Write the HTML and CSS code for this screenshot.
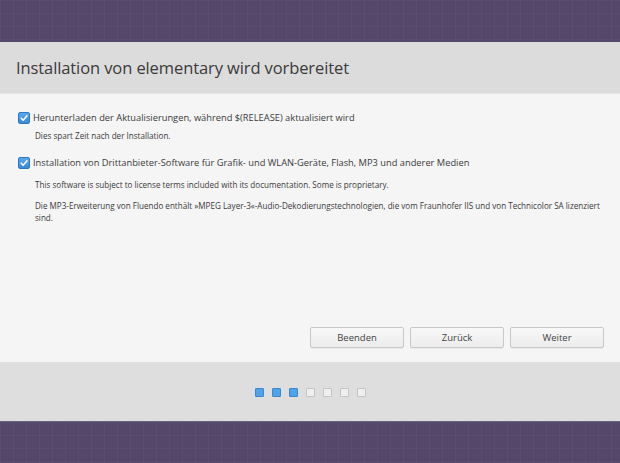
FILE: index.html
```html
<!DOCTYPE html>
<html>
<head>
<meta charset="utf-8">
<link rel="stylesheet" href="styles.css">
</head>
<body>
<div class="screen">
  <div class="top"></div>
  <div class="window">
    <div class="header"><h1 class="title">Installation von elementary wird vorbereitet</h1></div>
    <div class="content">
      <div class="options">
        <div class="option">
          <div class="check-row">
            <span class="cb"><svg viewBox="0 0 12 12" width="12" height="12"><path d="M2.6 6.2 L5 8.6 L9.6 3.4" fill="none" stroke="#fff" stroke-width="1.8" stroke-linecap="round" stroke-linejoin="round"/></svg></span>
            <span class="label">Herunterladen der Aktualisierungen, während $(RELEASE) aktualisiert wird</span>
          </div>
          <p class="desc">Dies spart Zeit nach der Installation.</p>
        </div>
        <div class="option">
          <div class="check-row">
            <span class="cb"><svg viewBox="0 0 12 12" width="12" height="12"><path d="M2.6 6.2 L5 8.6 L9.6 3.4" fill="none" stroke="#fff" stroke-width="1.8" stroke-linecap="round" stroke-linejoin="round"/></svg></span>
            <span class="label">Installation von Drittanbieter-Software für Grafik- und WLAN-Geräte, Flash, MP3 und anderer Medien</span>
          </div>
          <p class="desc">This software is subject to license terms included with its documentation. Some is proprietary.</p>
          <p class="desc">Die MP3-Erweiterung von Fluendo enthält »MPEG Layer-3«-Audio-Dekodierungstechnologien, die vom Fraunhofer IIS und von Technicolor SA lizenziert sind.</p>
        </div>
      </div>
      <div class="buttons">
        <button class="btn">Beenden</button>
        <button class="btn">Zurück</button>
        <button class="btn">Weiter</button>
      </div>
    </div>
    <div class="footer">
      <span class="dot on"></span><span class="dot on"></span><span class="dot on"></span><span class="dot"></span><span class="dot"></span><span class="dot"></span><span class="dot"></span>
    </div>
  </div>
  <div class="bottom"></div>
</div>
</body>
</html>
```
FILE: styles.css
```css
* { box-sizing: border-box; }
html, body { margin: 0; padding: 0; }
body {
  width: 620px; height: 463px; overflow: hidden;
  font-family: "Open Sans", "Noto Sans", sans-serif;
  color: #333;
  background: #54476a;
}
.screen { display: flex; flex-direction: column; height: 463px; }
.top {
  height: 42px;
  background-color: #54476a;
  background-image: linear-gradient(rgba(255,255,255,0.03) 1px, transparent 1px), linear-gradient(90deg, rgba(255,255,255,0.03) 1px, transparent 1px);
  background-size: 13px 13px;
}
.bottom {
  flex: 1;
  background-color: #54476a;
  border-top: 1px solid #6a5e7e;
  background-image: linear-gradient(rgba(255,255,255,0.03) 1px, transparent 1px), linear-gradient(90deg, rgba(255,255,255,0.03) 1px, transparent 1px);
  background-size: 13px 13px;
}
.window { display: flex; flex-direction: column; }
.header {
  height: 52px;
  background: #dcdcdc;
  display: flex; align-items: center;
  padding: 0 16px;
  border-bottom: 1px solid #e6e6e6;
}
.title {
  margin: 0; font-weight: 400; font-size: 16.5px; color: #3a3a3a;
  letter-spacing: -0.1px;
}
.content {
  height: 268px;
  background: #f5f5f5;
  display: flex; flex-direction: column; justify-content: space-between;
  padding: 17px 14px 14px 18px;
}
.options { display: flex; flex-direction: column; gap: 14px; }
.check-row { display: flex; align-items: center; gap: 3px; height: 14px; }
.cb {
  width: 12px; height: 12px; border-radius: 2px;
  background: linear-gradient(#5aa8ec, #3a8ad6);
  border: 1px solid #2f78c0;
  display: flex; align-items: center; justify-content: center;
  flex: none;
}
.cb svg { display: block; }
.label { font-size: 9.3px; color: #3a3a3a; line-height: 14px; }
.desc { margin: 5px 0 0 17px; font-size: 8.1px; line-height: 12px; color: #3a3a3a; }
.desc + .desc { margin-top: 9px; }
.option:nth-child(2) .check-row + .desc { margin-top: 9px; }
.buttons { display: flex; justify-content: flex-end; gap: 6px; margin-right: 2px; }
.btn {
  width: 94px; height: 21px;
  font-family: inherit; font-size: 9.5px; color: #444;
  background: linear-gradient(#f8f8f8, #ececec);
  border: 1px solid #c8c8c8; border-radius: 2px;
  box-shadow: 0 1px 0 rgba(0,0,0,0.04);
  padding: 0;
}
.footer {
  height: 59px;
  background: #dedede;
  display: flex; align-items: center; justify-content: center; gap: 8px;
  padding-top: 1px;
}
.dot {
  width: 9px; height: 9px; border-radius: 1px;
  border: 1px solid #c4c4c4;
  background: #efefef;
}
.dot.on { background: #4fa3ea; border-color: #3c87cc; }
```
